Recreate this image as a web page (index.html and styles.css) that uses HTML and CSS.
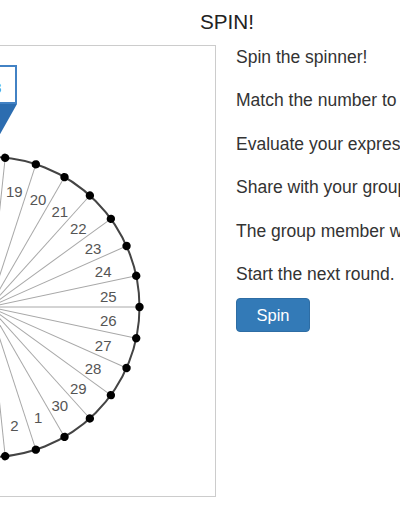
FILE: index.html
```html
<!DOCTYPE html>
<html>
<head>
<meta charset="utf-8">
<title>SPIN!</title>
<link rel="stylesheet" href="styles.css">
</head>
<body>
<div class="page">
  <h1 class="title">SPIN!</h1>
  <div class="row">
    <div class="board">
      <svg width="450" height="450" viewBox="0 0 450 450" xmlns="http://www.w3.org/2000/svg">
        <g transform="translate(224.5 261)">
          <g class="spokes">
            <line x2="150" transform="rotate(0)"/><line x2="150" transform="rotate(12)"/><line x2="150" transform="rotate(24)"/><line x2="150" transform="rotate(36)"/><line x2="150" transform="rotate(48)"/><line x2="150" transform="rotate(60)"/><line x2="150" transform="rotate(72)"/><line x2="150" transform="rotate(84)"/><line x2="150" transform="rotate(96)"/><line x2="150" transform="rotate(108)"/><line x2="150" transform="rotate(120)"/><line x2="150" transform="rotate(132)"/><line x2="150" transform="rotate(144)"/><line x2="150" transform="rotate(156)"/><line x2="150" transform="rotate(168)"/><line x2="150" transform="rotate(180)"/><line x2="150" transform="rotate(192)"/><line x2="150" transform="rotate(204)"/><line x2="150" transform="rotate(216)"/><line x2="150" transform="rotate(228)"/><line x2="150" transform="rotate(240)"/><line x2="150" transform="rotate(252)"/><line x2="150" transform="rotate(264)"/><line x2="150" transform="rotate(276)"/><line x2="150" transform="rotate(288)"/><line x2="150" transform="rotate(300)"/><line x2="150" transform="rotate(312)"/><line x2="150" transform="rotate(324)"/><line x2="150" transform="rotate(336)"/><line x2="150" transform="rotate(348)"/>
          </g>
          <circle class="rim" r="150"/>
          <g class="dots">
            <circle cx="150" r="4.2" transform="rotate(0)"/><circle cx="150" r="4.2" transform="rotate(12)"/><circle cx="150" r="4.2" transform="rotate(24)"/><circle cx="150" r="4.2" transform="rotate(36)"/><circle cx="150" r="4.2" transform="rotate(48)"/><circle cx="150" r="4.2" transform="rotate(60)"/><circle cx="150" r="4.2" transform="rotate(72)"/><circle cx="150" r="4.2" transform="rotate(84)"/><circle cx="150" r="4.2" transform="rotate(96)"/><circle cx="150" r="4.2" transform="rotate(108)"/><circle cx="150" r="4.2" transform="rotate(120)"/><circle cx="150" r="4.2" transform="rotate(132)"/><circle cx="150" r="4.2" transform="rotate(144)"/><circle cx="150" r="4.2" transform="rotate(156)"/><circle cx="150" r="4.2" transform="rotate(168)"/><circle cx="150" r="4.2" transform="rotate(180)"/><circle cx="150" r="4.2" transform="rotate(192)"/><circle cx="150" r="4.2" transform="rotate(204)"/><circle cx="150" r="4.2" transform="rotate(216)"/><circle cx="150" r="4.2" transform="rotate(228)"/><circle cx="150" r="4.2" transform="rotate(240)"/><circle cx="150" r="4.2" transform="rotate(252)"/><circle cx="150" r="4.2" transform="rotate(264)"/><circle cx="150" r="4.2" transform="rotate(276)"/><circle cx="150" r="4.2" transform="rotate(288)"/><circle cx="150" r="4.2" transform="rotate(300)"/><circle cx="150" r="4.2" transform="rotate(312)"/><circle cx="150" r="4.2" transform="rotate(324)"/><circle cx="150" r="4.2" transform="rotate(336)"/><circle cx="150" r="4.2" transform="rotate(348)"/>
          </g>
          <g class="labels">
            <text transform="rotate(-78) translate(119.5 0) rotate(78)" dy="7">19</text>
            <text transform="rotate(-66) translate(119.5 0) rotate(66)" dy="7">20</text>
            <text transform="rotate(-54) translate(119.5 0) rotate(54)" dy="7">21</text>
            <text transform="rotate(-42) translate(119.5 0) rotate(42)" dy="7">22</text>
            <text transform="rotate(-30) translate(119.5 0) rotate(30)" dy="7">23</text>
            <text transform="rotate(-18) translate(119.5 0) rotate(18)" dy="7">24</text>
            <text transform="rotate(-6) translate(119.5 0) rotate(6)" dy="7">25</text>
            <text transform="rotate(6) translate(119.5 0) rotate(-6)" dy="7">26</text>
            <text transform="rotate(18) translate(119.5 0) rotate(-18)" dy="7">27</text>
            <text transform="rotate(30) translate(119.5 0) rotate(-30)" dy="7">28</text>
            <text transform="rotate(42) translate(119.5 0) rotate(-42)" dy="7">29</text>
            <text transform="rotate(54) translate(119.5 0) rotate(-54)" dy="7">30</text>
            <text transform="rotate(66) translate(119.5 0) rotate(-66)" dy="7">1</text>
            <text transform="rotate(78) translate(119.5 0) rotate(-78)" dy="7">2</text>
            <text transform="rotate(90) translate(119.5 0) rotate(-90)" dy="7">3</text>
            <text transform="rotate(102) translate(119.5 0) rotate(-102)" dy="7">4</text>
            <text transform="rotate(114) translate(119.5 0) rotate(-114)" dy="7">5</text>
            <text transform="rotate(126) translate(119.5 0) rotate(-126)" dy="7">6</text>
            <text transform="rotate(138) translate(119.5 0) rotate(-138)" dy="7">7</text>
            <text transform="rotate(150) translate(119.5 0) rotate(-150)" dy="7">8</text>
            <text transform="rotate(162) translate(119.5 0) rotate(-162)" dy="7">9</text>
            <text transform="rotate(174) translate(119.5 0) rotate(-174)" dy="7">10</text>
            <text transform="rotate(186) translate(119.5 0) rotate(-186)" dy="7">11</text>
            <text transform="rotate(198) translate(119.5 0) rotate(-198)" dy="7">12</text>
            <text transform="rotate(210) translate(119.5 0) rotate(-210)" dy="7">13</text>
            <text transform="rotate(222) translate(119.5 0) rotate(-222)" dy="7">14</text>
            <text transform="rotate(234) translate(119.5 0) rotate(-234)" dy="7">15</text>
            <text transform="rotate(246) translate(119.5 0) rotate(-246)" dy="7">16</text>
            <text transform="rotate(258) translate(119.5 0) rotate(-258)" dy="7">17</text>
            <text transform="rotate(270) translate(119.5 0) rotate(-270)" dy="7">18</text>
          </g>
        </g>
        <g class="pointer">
          <rect class="pointer-box" x="198" y="20" width="53" height="37"/>
          <text class="pointer-text" x="228.5" y="47">18</text>
          <polygon class="pointer-tip" points="252,58 197,58 224.5,107"/>
        </g>
      </svg>
    </div>
    <div class="steps">
      <div class="step-list">
        <p>Spin the spinner!</p>
        <p>Match the number to your expression card.</p>
        <p>Evaluate your expression.</p>
        <p>Share with your group.</p>
        <p>The group member with the greatest value wins.</p>
        <p>Start the next round.</p>
      </div>
      <button class="btn">Spin</button>
    </div>
  </div>
</div>
</body>
</html>
```

FILE: styles.css
```css
html, body {
  margin: 0;
  padding: 0;
  background: #fff;
  overflow: hidden;
}

body {
  width: 400px;
  height: 516px;
  font-family: "Liberation Sans", Arial, Helvetica, sans-serif;
  color: #333;
}

.page {
  padding-top: 10px;
}

.title {
  margin: 0 0 11px;
  width: 454px;
  text-align: center;
  font-size: 20.7px;
  line-height: 24px;
  font-weight: normal;
  color: #222;
}

.row {
  display: flex;
  align-items: flex-start;
  gap: 20px;
  margin-left: -236px;
}

.board {
  flex: none;
  width: 452px;
  height: 452px;
  border: 1px solid #ccc;
  box-sizing: border-box;
  background: #fff;
}

.board svg {
  display: block;
}

.spokes line {
  stroke: #a8a8a8;
  stroke-width: 1;
}

.rim {
  fill: none;
  stroke: #444;
  stroke-width: 2;
}

.dots circle {
  fill: #000;
}

.labels text {
  font-family: "Liberation Sans", Arial, sans-serif;
  font-size: 15px;
  fill: #555;
  text-anchor: middle;
}

.pointer-box {
  fill: #fff;
  stroke: #4282c4;
  stroke-width: 2;
}

.pointer-text {
  font-family: "Liberation Sans", Arial, sans-serif;
  font-size: 14px;
  fill: #3a7bbf;
  text-anchor: middle;
}

.pointer-tip {
  fill: #2c6db0;
}

.steps {
  flex: none;
  display: flex;
  flex-direction: column;
  align-items: flex-start;
  white-space: nowrap;
}

.step-list {
  display: flex;
  flex-direction: column;
  gap: 19.4px;
}

.step-list p {
  margin: 0;
  font-size: 17.5px;
  line-height: 24px;
}

.btn {
  margin-top: 12px;
  font-family: "Liberation Sans", Arial, sans-serif;
  font-size: 16.5px;
  line-height: 22px;
  padding: 5px 19.5px;
  color: #fff;
  background: #337ab7;
  border: 1px solid #2e6da4;
  border-radius: 4px;
}
```
